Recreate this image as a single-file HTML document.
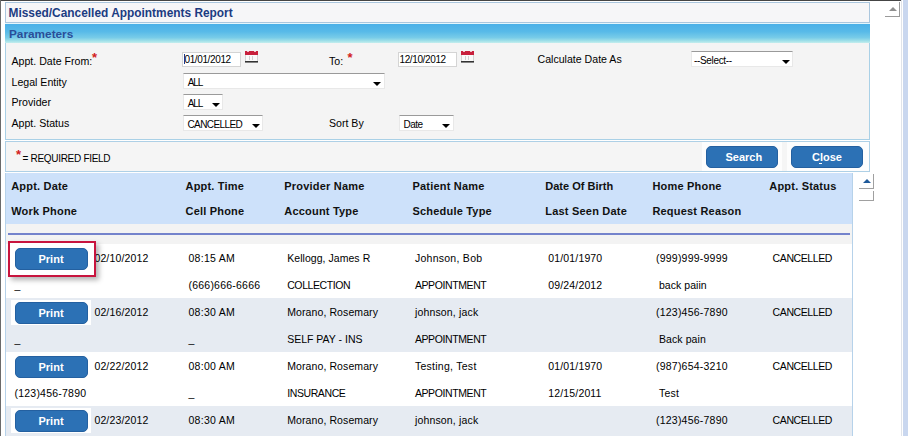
<!DOCTYPE html>
<html><head><meta charset="utf-8"><style>
html,body{margin:0;padding:0;width:908px;height:436px;overflow:hidden;background:#fff}
body>div,body>svg{position:absolute}
.t{white-space:nowrap}
</style></head><body>
<div style="left:0px;top:0px;width:901px;height:1px;background:#454545"></div>
<div style="left:0px;top:0px;width:1px;height:436px;background:#6a6a6a"></div>
<div style="left:901px;top:0px;width:1px;height:436px;background:#e0e4ea"></div>
<div style="left:903px;top:0px;width:5px;height:436px;background:#c9d7ef"></div>
<div style="left:899px;top:2px;width:1px;height:15px;background:#9a9a9a"></div>
<div style="left:885px;top:16px;width:15px;height:1px;background:#9a9a9a"></div>
<div style="left:888.5px;top:7px;width:0;height:0;border-left:4.0px solid transparent;border-right:4.0px solid transparent;border-bottom:4px solid #8f8f8f"></div>
<div style="left:5px;top:2px;width:865px;height:21px;background:#f6f6f8;border:1px solid #aac6de;box-sizing:border-box"></div>
<div class="t" style="left:8.5px;top:7.5px;font:bold 11.9px/1 'Liberation Sans', sans-serif;color:#1c3c82;">Missed/Cancelled Appointments Report</div>
<div style="left:5px;top:23px;width:865px;height:20px;background:linear-gradient(#4ab0e8 0%,#58bae8 40%,#78cce8 72%,#9edfe8 88%,#c4eeee 100%);border-top:1px solid #e4f6fc;box-sizing:border-box"></div>
<div class="t" style="left:9px;top:29px;font:bold 11.8px/1 'Liberation Sans', sans-serif;color:#2a4e98;">Parameters</div>
<div style="left:5px;top:43px;width:865px;height:97px;background:#f4f4f4;border:1px solid #a9d0e6;border-top:none;box-sizing:border-box"></div>
<div class="t" style="left:11.5px;top:56px;font:10.6px/1 'Liberation Sans', sans-serif;color:#000;">Appt. Date From:</div>
<div class="t" style="left:92px;top:51px;font:bold 13px/1 'Liberation Sans', sans-serif;color:#d22020">*</div>
<div class="t" style="left:11.5px;top:76.5px;font:10.6px/1 'Liberation Sans', sans-serif;color:#000;">Legal Entity</div>
<div class="t" style="left:11.5px;top:97px;font:10.6px/1 'Liberation Sans', sans-serif;color:#000;">Provider</div>
<div class="t" style="left:11.5px;top:118px;font:10.6px/1 'Liberation Sans', sans-serif;color:#000;">Appt. Status</div>
<div class="t" style="left:329px;top:56px;font:10.6px/1 'Liberation Sans', sans-serif;color:#000;">To:</div>
<div class="t" style="left:347.5px;top:51px;font:bold 13px/1 'Liberation Sans', sans-serif;color:#d22020">*</div>
<div class="t" style="left:537.5px;top:54px;font:10.6px/1 'Liberation Sans', sans-serif;color:#000;">Calculate Date As</div>
<div class="t" style="left:329px;top:118px;font:10.6px/1 'Liberation Sans', sans-serif;color:#000;">Sort By</div>
<div style="left:182px;top:52px;width:59px;height:15px;background:#fff;border:1px solid #d4d4d4;box-sizing:border-box"></div>
<div class="t" style="left:184.5px;top:55px;font:10px/1 'Liberation Sans', sans-serif;color:#000;letter-spacing:-0.38px;">01/01/2012</div>
<div style="left:184px;top:54px;width:1px;height:10px;background:#1a3a8a"></div>
<svg style="position:absolute;left:245px;top:50px" width="14" height="13" viewBox="0 0 14 13"><rect x="0.5" y="4.5" width="12" height="8" fill="#fafafa" stroke="#d4d4d4"/><rect x="0" y="1" width="13" height="4" fill="#c8203c"/><rect x="2" y="1" width="2" height="1" fill="#f0c0c8"/><rect x="9" y="1" width="2" height="1" fill="#f0c0c8"/><rect x="4" y="6" width="1" height="4" fill="#d0d0d0"/><rect x="7" y="6" width="1" height="4" fill="#d0d0d0"/><rect x="0" y="11" width="13" height="1.5" fill="#333"/></svg>
<div style="left:398px;top:52px;width:59px;height:15px;background:#fff;border:1px solid #d4d4d4;box-sizing:border-box"></div>
<div class="t" style="left:399.5px;top:55px;font:10px/1 'Liberation Sans', sans-serif;color:#000;letter-spacing:-0.38px;">12/10/2012</div>
<svg style="position:absolute;left:461px;top:50px" width="14" height="13" viewBox="0 0 14 13"><rect x="0.5" y="4.5" width="12" height="8" fill="#fafafa" stroke="#d4d4d4"/><rect x="0" y="1" width="13" height="4" fill="#c8203c"/><rect x="2" y="1" width="2" height="1" fill="#f0c0c8"/><rect x="9" y="1" width="2" height="1" fill="#f0c0c8"/><rect x="4" y="6" width="1" height="4" fill="#d0d0d0"/><rect x="7" y="6" width="1" height="4" fill="#d0d0d0"/><rect x="0" y="11" width="13" height="1.5" fill="#333"/></svg>
<div style="left:182.5px;top:73px;width:202px;height:16px;background:#fff;border-top:1px solid #9a9a9a;border-left:1px solid #e8e8e8;border-right:1px solid #e8e8e8;border-bottom:1px solid #e8e8e8;box-sizing:border-box"></div>
<div class="t" style="left:187.8px;top:78px;font:10px/1 'Liberation Sans', sans-serif;color:#000;letter-spacing:-1.1px;">ALL</div>
<div style="left:373px;top:82px;width:0;height:0;border-left:4.0px solid transparent;border-right:4.0px solid transparent;border-top:4px solid #000"></div>
<div style="left:183px;top:94px;width:40px;height:16px;background:#fff;border-top:1px solid #9a9a9a;border-left:1px solid #e8e8e8;border-right:1px solid #e8e8e8;border-bottom:1px solid #e8e8e8;box-sizing:border-box"></div>
<div class="t" style="left:187.8px;top:99px;font:10px/1 'Liberation Sans', sans-serif;color:#000;letter-spacing:-1.1px;">ALL</div>
<div style="left:211.5px;top:103px;width:0;height:0;border-left:4.0px solid transparent;border-right:4.0px solid transparent;border-top:4px solid #000"></div>
<div style="left:183px;top:115px;width:80px;height:16px;background:#fff;border-top:1px solid #9a9a9a;border-left:1px solid #e8e8e8;border-right:1px solid #e8e8e8;border-bottom:1px solid #e8e8e8;box-sizing:border-box"></div>
<div class="t" style="left:187.5px;top:120px;font:10px/1 'Liberation Sans', sans-serif;color:#000;letter-spacing:-0.6px;">CANCELLED</div>
<div style="left:251.5px;top:123.5px;width:0;height:0;border-left:4.0px solid transparent;border-right:4.0px solid transparent;border-top:4px solid #000"></div>
<div style="left:398.5px;top:115px;width:55px;height:16px;background:#fff;border-top:1px solid #9a9a9a;border-left:1px solid #e8e8e8;border-right:1px solid #e8e8e8;border-bottom:1px solid #e8e8e8;box-sizing:border-box"></div>
<div class="t" style="left:403.5px;top:120px;font:10px/1 'Liberation Sans', sans-serif;color:#000;letter-spacing:-0.5px;">Date</div>
<div style="left:441.5px;top:124px;width:0;height:0;border-left:4.0px solid transparent;border-right:4.0px solid transparent;border-top:4px solid #000"></div>
<div style="left:691px;top:51px;width:102px;height:16px;background:#fff;border-top:1px solid #9a9a9a;border-left:1px solid #e8e8e8;border-right:1px solid #e8e8e8;border-bottom:1px solid #e8e8e8;box-sizing:border-box"></div>
<div class="t" style="left:694px;top:56px;font:10px/1 'Liberation Sans', sans-serif;color:#000;letter-spacing:-0.34px;">--Select--</div>
<div style="left:781.5px;top:60px;width:0;height:0;border-left:4.0px solid transparent;border-right:4.0px solid transparent;border-top:4px solid #000"></div>
<div style="left:5px;top:141px;width:865px;height:31px;background:#f5f5f5;border:1px solid #aed0e6;box-sizing:border-box"></div>
<div class="t" style="left:16px;top:147.5px;font:bold 13px/1 'Liberation Sans', sans-serif;color:#d22020">*</div>
<div class="t" style="left:22.5px;top:154px;font:10px/1 'Liberation Sans', sans-serif;color:#000;letter-spacing:-0.3px;">= REQUIRED FIELD</div>
<div style="left:702px;top:142px;width:80px;height:29px;background:#fdfdfd"></div>
<div style="left:787px;top:142px;width:82px;height:29px;background:#fdfdfd"></div>
<div style="left:706px;top:145.5px;width:72px;height:22px;background:#2c71b5;border:1px solid #2460a0;box-sizing:border-box;border-radius:5px"></div>
<div class="t" style="left:725.5px;top:152px;font:bold 11px/1 'Liberation Sans', sans-serif;color:#fff;">Search</div>
<div style="left:791px;top:145.5px;width:72px;height:22px;background:#2c71b5;border:1px solid #2460a0;box-sizing:border-box;border-radius:5px"></div>
<div class="t" style="left:812px;top:152px;font:bold 11px/1 'Liberation Sans', sans-serif;color:#fff;">Close</div>
<div style="left:819px;top:163px;width:3px;height:1px;background:#fff"></div>
<div style="left:5px;top:173px;width:848px;height:263px;background:#fff;border-left:1px solid #b6d2ea;border-right:1px solid #b6d2ea;box-sizing:border-box"></div>
<div style="left:6px;top:173px;width:846px;height:50.5px;background:#cde1fa"></div>
<div style="left:6px;top:223.5px;width:846px;height:20.5px;background:#f3f3f3"></div>
<div style="left:8px;top:233px;width:842px;height:2px;background:#7483cc"></div>
<div class="t" style="left:11.2px;top:181px;font:bold 11px/1 'Liberation Sans', sans-serif;color:#111;letter-spacing:0.2px;">Appt. Date</div>
<div class="t" style="left:11.2px;top:206px;font:bold 11px/1 'Liberation Sans', sans-serif;color:#111;letter-spacing:0.2px;">Work Phone</div>
<div class="t" style="left:185.5px;top:181px;font:bold 11px/1 'Liberation Sans', sans-serif;color:#111;letter-spacing:0.2px;">Appt. Time</div>
<div class="t" style="left:185.5px;top:206px;font:bold 11px/1 'Liberation Sans', sans-serif;color:#111;letter-spacing:0.2px;">Cell Phone</div>
<div class="t" style="left:284.3px;top:181px;font:bold 11px/1 'Liberation Sans', sans-serif;color:#111;letter-spacing:0.2px;">Provider Name</div>
<div class="t" style="left:284.3px;top:206px;font:bold 11px/1 'Liberation Sans', sans-serif;color:#111;letter-spacing:0.2px;">Account Type</div>
<div class="t" style="left:412.5px;top:181px;font:bold 11px/1 'Liberation Sans', sans-serif;color:#111;letter-spacing:0.2px;">Patient Name</div>
<div class="t" style="left:412.5px;top:206px;font:bold 11px/1 'Liberation Sans', sans-serif;color:#111;letter-spacing:0.2px;">Schedule Type</div>
<div class="t" style="left:545.3px;top:181px;font:bold 11px/1 'Liberation Sans', sans-serif;color:#111;">Date Of Birth</div>
<div class="t" style="left:545.3px;top:206px;font:bold 11px/1 'Liberation Sans', sans-serif;color:#111;letter-spacing:0.2px;">Last Seen Date</div>
<div class="t" style="left:652.4px;top:181px;font:bold 11px/1 'Liberation Sans', sans-serif;color:#111;letter-spacing:0.2px;">Home Phone</div>
<div class="t" style="left:652.4px;top:206px;font:bold 11px/1 'Liberation Sans', sans-serif;color:#111;letter-spacing:0.2px;">Request Reason</div>
<div class="t" style="left:769.3px;top:181px;font:bold 11px/1 'Liberation Sans', sans-serif;color:#111;letter-spacing:0.2px;">Appt. Status</div>
<div style="left:6px;top:244px;width:846px;height:54px;background:#ffffff"></div>
<div style="left:8px;top:241px;width:88px;height:36px;background:#fff;box-shadow:3px 3px 5px rgba(0,0,0,0.3)"></div>
<div style="left:15px;top:248px;width:72.5px;height:22px;background:#2c71b5;border:1px solid #2460a0;box-sizing:border-box;border-radius:5px"></div>
<div class="t" style="left:38.5px;top:254px;font:bold 11px/1 'Liberation Sans', sans-serif;color:#fff;">Print</div>
<div class="t" style="left:94.4px;top:253px;font:10.5px/1 'Liberation Sans', sans-serif;color:#000;letter-spacing:0.15px;">02/10/2012</div>
<div class="t" style="left:188.5px;top:253px;font:10.5px/1 'Liberation Sans', sans-serif;color:#000;letter-spacing:0.27px;">08:15 AM</div>
<div class="t" style="left:287.2px;top:253px;font:10.5px/1 'Liberation Sans', sans-serif;color:#000;letter-spacing:0.05px;">Kellogg, James R</div>
<div class="t" style="left:414.9px;top:253px;font:10.5px/1 'Liberation Sans', sans-serif;color:#000;letter-spacing:0.27px;">Johnson, Bob</div>
<div class="t" style="left:548.3px;top:253px;font:10.5px/1 'Liberation Sans', sans-serif;color:#000;letter-spacing:0.15px;">01/01/1970</div>
<div class="t" style="left:656px;top:253px;font:10.5px/1 'Liberation Sans', sans-serif;color:#000;letter-spacing:0.22px;">(999)999-9999</div>
<div class="t" style="left:772.6px;top:253px;font:10.5px/1 'Liberation Sans', sans-serif;color:#000;letter-spacing:-0.4px;">CANCELLED</div>
<div class="t" style="left:14.5px;top:280px;font:10.5px/1 'Liberation Sans', sans-serif;color:#000;">_</div>
<div class="t" style="left:188.5px;top:280px;font:10.5px/1 'Liberation Sans', sans-serif;color:#000;letter-spacing:0.22px;">(666)666-6666</div>
<div class="t" style="left:287.2px;top:280px;font:10.5px/1 'Liberation Sans', sans-serif;color:#000;letter-spacing:-0.4px;">COLLECTION</div>
<div class="t" style="left:414.9px;top:280px;font:10.5px/1 'Liberation Sans', sans-serif;color:#000;letter-spacing:-0.4px;">APPOINTMENT</div>
<div class="t" style="left:548.3px;top:280px;font:10.5px/1 'Liberation Sans', sans-serif;color:#000;letter-spacing:0.15px;">09/24/2012</div>
<div class="t" style="left:658.9px;top:280px;font:10.5px/1 'Liberation Sans', sans-serif;color:#000;letter-spacing:0.05px;">back paiin</div>
<div style="left:8px;top:241px;width:88px;height:36px;border:2px solid #c8143e;box-sizing:border-box"></div>
<div style="left:6px;top:298px;width:846px;height:54px;background:#e6ebf2"></div>
<div style="left:11px;top:300px;width:80px;height:25px;background:#fff"></div>
<div style="left:15px;top:302px;width:72.5px;height:22px;background:#2c71b5;border:1px solid #2460a0;box-sizing:border-box;border-radius:5px"></div>
<div class="t" style="left:38.5px;top:308px;font:bold 11px/1 'Liberation Sans', sans-serif;color:#fff;">Print</div>
<div class="t" style="left:94.4px;top:307px;font:10.5px/1 'Liberation Sans', sans-serif;color:#000;letter-spacing:0.15px;">02/16/2012</div>
<div class="t" style="left:188.5px;top:307px;font:10.5px/1 'Liberation Sans', sans-serif;color:#000;letter-spacing:0.27px;">08:30 AM</div>
<div class="t" style="left:287.2px;top:307px;font:10.5px/1 'Liberation Sans', sans-serif;color:#000;letter-spacing:0.1px;">Morano, Rosemary</div>
<div class="t" style="left:414.9px;top:307px;font:10.5px/1 'Liberation Sans', sans-serif;color:#000;letter-spacing:0.17px;">johnson, jack</div>
<div class="t" style="left:548.3px;top:307px;font:10.5px/1 'Liberation Sans', sans-serif;color:#000;"></div>
<div class="t" style="left:656px;top:307px;font:10.5px/1 'Liberation Sans', sans-serif;color:#000;letter-spacing:0.22px;">(123)456-7890</div>
<div class="t" style="left:772.6px;top:307px;font:10.5px/1 'Liberation Sans', sans-serif;color:#000;letter-spacing:-0.4px;">CANCELLED</div>
<div class="t" style="left:14.5px;top:334px;font:10.5px/1 'Liberation Sans', sans-serif;color:#000;">_</div>
<div class="t" style="left:188.5px;top:334px;font:10.5px/1 'Liberation Sans', sans-serif;color:#000;">_</div>
<div class="t" style="left:287.2px;top:334px;font:10.5px/1 'Liberation Sans', sans-serif;color:#000;">SELF PAY - INS</div>
<div class="t" style="left:414.9px;top:334px;font:10.5px/1 'Liberation Sans', sans-serif;color:#000;letter-spacing:-0.4px;">APPOINTMENT</div>
<div class="t" style="left:548.3px;top:334px;font:10.5px/1 'Liberation Sans', sans-serif;color:#000;"></div>
<div class="t" style="left:658.9px;top:334px;font:10.5px/1 'Liberation Sans', sans-serif;color:#000;letter-spacing:0.1px;">Back pain</div>
<div style="left:6px;top:352px;width:846px;height:54px;background:#ffffff"></div>
<div style="left:15px;top:356px;width:72.5px;height:22px;background:#2c71b5;border:1px solid #2460a0;box-sizing:border-box;border-radius:5px"></div>
<div class="t" style="left:38.5px;top:362px;font:bold 11px/1 'Liberation Sans', sans-serif;color:#fff;">Print</div>
<div class="t" style="left:94.4px;top:361px;font:10.5px/1 'Liberation Sans', sans-serif;color:#000;letter-spacing:0.15px;">02/22/2012</div>
<div class="t" style="left:188.5px;top:361px;font:10.5px/1 'Liberation Sans', sans-serif;color:#000;letter-spacing:0.27px;">08:00 AM</div>
<div class="t" style="left:287.2px;top:361px;font:10.5px/1 'Liberation Sans', sans-serif;color:#000;letter-spacing:0.1px;">Morano, Rosemary</div>
<div class="t" style="left:414.9px;top:361px;font:10.5px/1 'Liberation Sans', sans-serif;color:#000;letter-spacing:0.27px;">Testing, Test</div>
<div class="t" style="left:548.3px;top:361px;font:10.5px/1 'Liberation Sans', sans-serif;color:#000;letter-spacing:0.15px;">01/01/1970</div>
<div class="t" style="left:656px;top:361px;font:10.5px/1 'Liberation Sans', sans-serif;color:#000;letter-spacing:0.22px;">(987)654-3210</div>
<div class="t" style="left:772.6px;top:361px;font:10.5px/1 'Liberation Sans', sans-serif;color:#000;letter-spacing:-0.4px;">CANCELLED</div>
<div class="t" style="left:14.5px;top:388px;font:10.5px/1 'Liberation Sans', sans-serif;color:#000;letter-spacing:0.22px;">(123)456-7890</div>
<div class="t" style="left:188.5px;top:388px;font:10.5px/1 'Liberation Sans', sans-serif;color:#000;">_</div>
<div class="t" style="left:287.2px;top:388px;font:10.5px/1 'Liberation Sans', sans-serif;color:#000;letter-spacing:-0.4px;">INSURANCE</div>
<div class="t" style="left:414.9px;top:388px;font:10.5px/1 'Liberation Sans', sans-serif;color:#000;letter-spacing:-0.4px;">APPOINTMENT</div>
<div class="t" style="left:548.3px;top:388px;font:10.5px/1 'Liberation Sans', sans-serif;color:#000;letter-spacing:0.15px;">12/15/2011</div>
<div class="t" style="left:658.9px;top:388px;font:10.5px/1 'Liberation Sans', sans-serif;color:#000;letter-spacing:0.27px;">Test</div>
<div style="left:6px;top:406px;width:846px;height:54px;background:#e6ebf2"></div>
<div style="left:11px;top:408px;width:80px;height:25px;background:#fff"></div>
<div style="left:15px;top:410px;width:72.5px;height:22px;background:#2c71b5;border:1px solid #2460a0;box-sizing:border-box;border-radius:5px"></div>
<div class="t" style="left:38.5px;top:416px;font:bold 11px/1 'Liberation Sans', sans-serif;color:#fff;">Print</div>
<div class="t" style="left:94.4px;top:415px;font:10.5px/1 'Liberation Sans', sans-serif;color:#000;letter-spacing:0.15px;">02/23/2012</div>
<div class="t" style="left:188.5px;top:415px;font:10.5px/1 'Liberation Sans', sans-serif;color:#000;letter-spacing:0.27px;">08:30 AM</div>
<div class="t" style="left:287.2px;top:415px;font:10.5px/1 'Liberation Sans', sans-serif;color:#000;letter-spacing:0.1px;">Morano, Rosemary</div>
<div class="t" style="left:414.9px;top:415px;font:10.5px/1 'Liberation Sans', sans-serif;color:#000;letter-spacing:0.17px;">johnson, jack</div>
<div class="t" style="left:548.3px;top:415px;font:10.5px/1 'Liberation Sans', sans-serif;color:#000;"></div>
<div class="t" style="left:656px;top:415px;font:10.5px/1 'Liberation Sans', sans-serif;color:#000;letter-spacing:0.22px;">(123)456-7890</div>
<div class="t" style="left:772.6px;top:415px;font:10.5px/1 'Liberation Sans', sans-serif;color:#000;letter-spacing:-0.4px;">CANCELLED</div>
<div class="t" style="left:14.5px;top:442px;font:10.5px/1 'Liberation Sans', sans-serif;color:#000;"></div>
<div class="t" style="left:188.5px;top:442px;font:10.5px/1 'Liberation Sans', sans-serif;color:#000;"></div>
<div class="t" style="left:287.2px;top:442px;font:10.5px/1 'Liberation Sans', sans-serif;color:#000;"></div>
<div class="t" style="left:414.9px;top:442px;font:10.5px/1 'Liberation Sans', sans-serif;color:#000;"></div>
<div class="t" style="left:548.3px;top:442px;font:10.5px/1 'Liberation Sans', sans-serif;color:#000;"></div>
<div class="t" style="left:658.9px;top:442px;font:10.5px/1 'Liberation Sans', sans-serif;color:#000;"></div>
<div style="left:872.5px;top:174px;width:1px;height:15px;background:#a0a0a0"></div>
<div style="left:859px;top:188px;width:14px;height:1px;background:#a0a0a0"></div>
<div style="left:862.5px;top:179px;width:0;height:0;border-left:4.0px solid transparent;border-right:4.0px solid transparent;border-bottom:4.5px solid #1f5a9a"></div>
<div style="left:872.5px;top:191px;width:1px;height:10px;background:#a0a0a0"></div>
<div style="left:859px;top:200px;width:14px;height:1px;background:#a0a0a0"></div>
</body></html>
